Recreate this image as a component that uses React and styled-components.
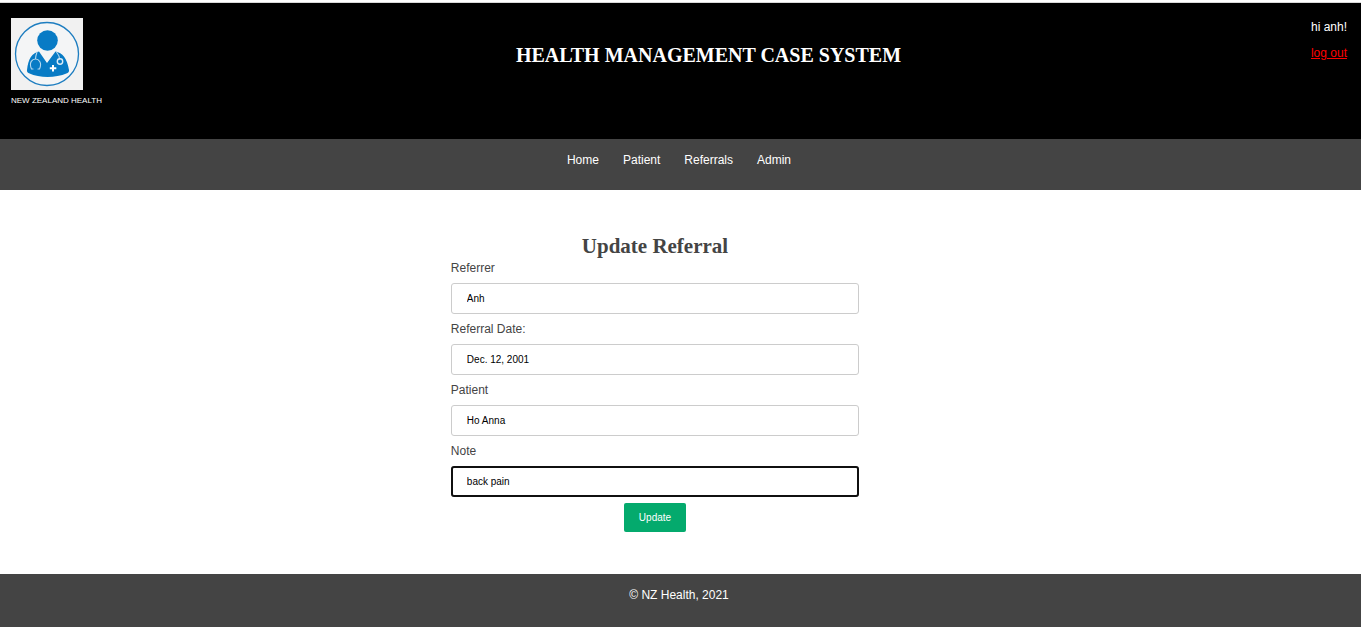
import React from "react";
import styled, { createGlobalStyle } from "styled-components";

const GlobalStyle = createGlobalStyle`
  *, *::before, *::after { box-sizing: border-box; }
  body {
    margin: 0;
    background: #fff;
    color: #444;
    font: 12px/18px "Liberation Sans", Arial, sans-serif;
  }
`;

const Page = styled.div`
  display: flex;
  flex-direction: column;
  min-height: 100vh;
  border-top: 2px solid #fff;
`;

const Header = styled.header`
  display: flex;
  justify-content: space-between;
  padding: 15px 14px 27px 11px;
  border-top: 1px solid #d8d8d8;
  background: #000;
  color: #fff;
`;

const Brand = styled.div`
  min-width: 95px;
  font-size: 8px;
  line-height: 22px;

  svg { display: block; }
`;

const SiteTitle = styled.h1`
  margin: 25px 0 0;
  font: bold 20px/24px "Liberation Serif", Georgia, serif;
`;

const Account = styled.div`
  display: flex;
  flex-direction: column;
  gap: 8px;
`;

const LogoutLink = styled.a`
  color: #f00;
`;

const Nav = styled.nav`
  display: flex;
  justify-content: center;
  gap: 24px;
  padding: 12px 3px 21px 0;
  background: #444;
`;

const NavLink = styled.a`
  color: #fff;
  text-decoration: none;
`;

const Main = styled.main`
  flex: 1;
  padding: 44px 51px 42px 0;
`;

const Form = styled.form`
  display: flex;
  flex-direction: column;
  align-items: center;
  width: 30vw;
  min-width: 240px;
  margin: 0 auto;
`;

const FormTitle = styled.h2`
  margin: 0;
  font: bold 21px/24px "Liberation Serif", Georgia, serif;
`;

const Label = styled.label`
  width: 100%;
  line-height: 20px;
`;

const Input = styled.input`
  width: 100%;
  height: 31px;
  margin: 5px 0;
  padding: 0 15px;
  border: 1px solid #ccc;
  border-radius: 3px;
  background: #fff;
  color: #000;
  font: 10px "Liberation Sans", Arial, sans-serif;

  &:focus {
    outline: 2px solid #101010;
    outline-offset: -2px;
  }
`;

const SubmitButton = styled.button`
  height: 29px;
  margin-top: 1px;
  padding: 0 15px;
  border: 0;
  border-radius: 2px;
  background: #04aa6d;
  color: #fff;
  font: 10px "Liberation Sans", Arial, sans-serif;
`;

const Footer = styled.footer`
  padding: 12px 3px 23px 0;
  background: #444;
  color: #fff;
  text-align: center;
`;

const fields = [
  { id: "referrer", label: "Referrer", value: "Anh" },
  { id: "date", label: "Referral Date:", value: "Dec. 12, 2001" },
  { id: "patient", label: "Patient", value: "Ho Anna" },
  { id: "note", label: "Note", value: "back pain", focused: true },
];

function DoctorLogo() {
  return (
    <svg width="72" height="72" viewBox="0 0 72 72" fill="none" aria-hidden="true">
      <path fill="#f1f1f1" d="M0 0h72v72H0z" />
      <circle cx="36" cy="36" r="31.5" fill="#f4f5f6" stroke="#1d7dc0" strokeWidth="1.3" />
      <circle cx="36.5" cy="22.5" r="10.3" fill="#087bc5" />
      <path
        fill="#087bc5"
        d="M28 33.5 36 45l8.5-11.5c7 1.5 11.500 6.500 13.500 18.500.3 1.600-.5 2.500-2 3.300C44 60.300 29 60.300 18 55.300c-1.500-.8-2.300-1.700-2-3.300 1.300-11.500 5-17 12-18.500Z"
      />
      <path fill="#f4f5f6" d="m29.500 33.500 6.500 10.800 7-10.800c-4 1.700-9.500 1.700-13.500 0Z" />
      <path
        stroke="#b5d8ef"
        strokeWidth="1.100"
        strokeLinecap="round"
        d="M26 34c-1 3-1.500 5-1.500 7M22 51h-1.500c-3-7 1-10 4-10s7 3.500 4 10H27M45.500 34c2 2.500 3 4.500 3 7"
      />
      <circle cx="49" cy="43.500" r="2.700" stroke="#dcecf7" strokeWidth="1.400" />
      <path stroke="#fff" strokeWidth="2" d="M42 47v6.500M38.800 50.200h6.500" />
    </svg>
  );
}

export default function App() {
  return (
    <>
      <GlobalStyle />
      <Page>
        <Header>
          <Brand>
            <DoctorLogo />
            NEW ZEALAND HEALTH
          </Brand>
          <SiteTitle>HEALTH MANAGEMENT CASE SYSTEM</SiteTitle>
          <Account>
            <span>hi anh!</span>
            <LogoutLink href="#logout">log out</LogoutLink>
          </Account>
        </Header>
        <Nav>
          <NavLink href="#home">Home</NavLink>
          <NavLink href="#patient">Patient</NavLink>
          <NavLink href="#referrals">Referrals</NavLink>
          <NavLink href="#admin">Admin</NavLink>
        </Nav>
        <Main>
          <Form onSubmit={(event) => event.preventDefault()}>
            <FormTitle>Update Referral</FormTitle>
            {fields.map(({ id, label, value, focused }) => (
              <React.Fragment key={id}>
                <Label htmlFor={id}>{label}</Label>
                <Input id={id} name={id} defaultValue={value} autoFocus={focused} />
              </React.Fragment>
            ))}
            <SubmitButton type="submit">Update</SubmitButton>
          </Form>
        </Main>
        <Footer>© NZ Health, 2021</Footer>
      </Page>
    </>
  );
}
